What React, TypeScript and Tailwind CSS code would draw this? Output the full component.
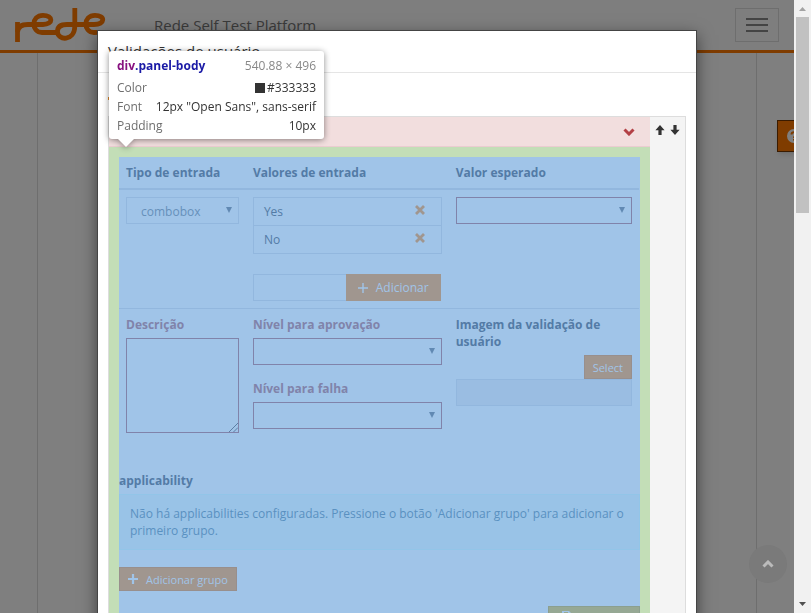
import type { ReactNode } from 'react';

function Chevron({ d, className }: { d: string; className: string }) {
  return (
    <svg viewBox="0 0 12 8" className={className} fill="none" stroke="currentColor" strokeWidth="3" aria-hidden="true">
      <path d={d} />
    </svg>
  );
}

function Plus({ thin = false }: { thin?: boolean }) {
  return (
    <svg viewBox="0 0 10 10" className="size-[10px]" fill="none" stroke="currentColor" strokeWidth={thin ? 1.4 : 2.2} aria-hidden="true">
      <path d="M5 0v10M0 5h10" />
    </svg>
  );
}

function Arrow({ down = false }: { down?: boolean }) {
  return (
    <svg viewBox="0 0 10 10" className={down ? 'size-[10px] rotate-180' : 'size-[10px]'} fill="#333" aria-hidden="true">
      <path d="M5 0l4.600 5.200H6.600V10H3.400V5.200H.4z" />
    </svg>
  );
}

function SelectBox({ id, label, options, required = false }: { id: string; label: string; options: string[]; required?: boolean }) {
  return (
    <div className="relative">
      <select
        id={id}
        aria-label={label}
        className={
          required
            ? 'block h-[27px] w-full appearance-none border border-[#8083aa] bg-transparent px-3 text-[#6690ba]'
            : 'block h-[27px] w-full appearance-none border border-[#92b7de] bg-transparent px-[14px] pt-[2px] text-[#6690ba]'
        }
      >
        {options.map((o) => (
          <option key={o}>{o}</option>
        ))}
      </select>
      <svg viewBox="0 0 6 6" className="pointer-events-none absolute top-[10px] right-[7px] size-[6px]" fill="#6189b3" aria-hidden="true">
        <path d="M0 0h6L3 6z" />
      </svg>
    </div>
  );
}

function FieldLabel({ htmlFor, children }: { htmlFor: string; children: ReactNode }) {
  return (
    <label htmlFor={htmlFor} className="mb-[5px] block font-bold text-[#8083aa]">
      {children}
    </label>
  );
}

function Page() {
  return (
    <div className="flex h-full flex-col bg-white">
      <header className="flex h-[53px] shrink-0 items-start justify-between border-b-[3px] border-[#ff7800] bg-[#fdfdfd] pr-[15px] pl-[14px]">
        <div className="flex">
          <svg viewBox="0 0 106 38" className="mt-[7px] h-[38px] w-[106px]" fill="none" stroke="#ff7800" strokeWidth="4.800" aria-label="rede" role="img">
            <path d="M3.500 35V15" />
            <path d="M3.500 25C4 19.500 8 17.500 14 17.500H29C39.500 17.500 39.500 8.300 29 8.300C17 8.300 17 25.500 28 25.500H42" />
            <path d="M60.800 1V19C60.800 34.500 43.500 34 43.500 24.500C43.500 19.500 47 17.500 53 17.500H80C91.500 17.500 91.500 8.300 81 8.300C69 8.300 69 25.500 80 25.500" />
            <path d="M78 23.100H105V25C96 25 92 27.900 80 27.900z" fill="#ff7800" stroke="none" />
          </svg>
          <span className="mt-[13px] ml-[34px] text-[15px] leading-[24px] text-[#777]">Rede Self Test Platform</span>
        </div>
        <button aria-label="Menu" className="mt-2 flex h-[34px] w-11 flex-col items-center justify-center gap-1 border border-[#ddd]">
          <span className="h-[2px] w-[22px] bg-[#888]" />
          <span className="h-[2px] w-[22px] bg-[#888]" />
          <span className="h-[2px] w-[22px] bg-[#888]" />
        </button>
      </header>
      <main className="mx-auto w-full max-w-[720px] flex-1 border-x border-[#ddd]" />
      <button aria-label="Ajuda" className="absolute top-[120px] -right-[13px] flex h-8 w-[30px] items-center justify-end border border-[#743700] bg-[#ff7800] pr-[5px] shadow-md">
        <svg viewBox="0 0 14 14" className="size-[14px]" aria-hidden="true">
          <circle cx="7" cy="7" r="7" fill="#fff" />
          <path d="M4.500 5.500C4.500 2.500 9.500 2.500 9.500 5.500C9.500 7 7 7 7 9M7 10v1.500" fill="none" stroke="#ff7800" strokeWidth="2" />
        </svg>
      </button>
    </div>
  );
}

function PanelBody() {
  return (
    <div className="h-[496px] border-[10px] border-[#c3deb7] bg-[#a0c4e8] text-[#537ba6]">
      <div className="pr-px">
        <table className="w-full table-fixed border-collapse text-left">
          <colgroup>
            <col className="w-[24.4%]" />
            <col className="w-[39%]" />
            <col />
          </colgroup>
          <thead>
            <tr className="h-8 border-b-2 border-[#92b7de]">
              <th className="px-[7px] font-bold">Tipo de entrada</th>
              <th className="px-[7px] font-bold">Valores de entrada</th>
              <th className="px-[7px] font-bold">Valor esperado</th>
            </tr>
          </thead>
          <tbody>
            <tr className="border-b border-[#92b7de] align-top">
              <td className="p-[7px]">
                <SelectBox id="tipo" label="Tipo de entrada" options={['combobox']} />
              </td>
              <td className="p-[7px]">
                <ul className="border border-[#92b7de]">
                  {['Yes', 'No'].map((v) => (
                    <li key={v} className="flex h-7 items-center justify-between border-b border-[#92b7de] pr-4 pl-[10px] last:h-[27px] last:border-b-0">
                      {v}
                      <button aria-label={`Remover ${v}`} className="mb-[3px]">
                        <svg viewBox="0 0 10 10" className="size-[10px]" stroke="#a0968f" strokeWidth="2.800" aria-hidden="true">
                          <path d="M1 1l8 8M9 1l-8 8" />
                        </svg>
                      </button>
                    </li>
                  ))}
                </ul>
                <div className="mt-5 flex pr-px">
                  <input aria-label="Novo valor" className="h-[27px] min-w-0 flex-1 border border-r-0 border-[#92b7de] bg-transparent px-2" />
                  <button className="flex h-[27px] items-center gap-2 bg-[#a0968f] px-[12px] text-[#a0c4e8]">
                    <Plus thin />
                    Adicionar
                  </button>
                </div>
              </td>
              <td className="p-[7px]">
                <SelectBox id="esperado" label="Valor esperado" options={['', 'Yes', 'No']} required />
              </td>
            </tr>
            <tr className="align-top">
              <td className="p-[7px]">
                <FieldLabel htmlFor="descricao">Descrição</FieldLabel>
                <div className="relative">
                  <textarea id="descricao" className="block h-[95px] w-full resize-none border border-[#8083aa] bg-transparent p-2" />
                  <svg viewBox="0 0 9 9" className="absolute right-[1px] bottom-[1px] size-[9px]" stroke="#5d7fa5" aria-hidden="true">
                    <path d="M0 9L9 0M4.500 9L9 4.500" />
                  </svg>
                </div>
              </td>
              <td className="p-[7px]">
                <FieldLabel htmlFor="aprovacao">Nível para aprovação</FieldLabel>
                <SelectBox id="aprovacao" label="Nível para aprovação" options={['']} required />
                <div className="mt-[15px]">
                  <FieldLabel htmlFor="falha">Nível para falha</FieldLabel>
                  <SelectBox id="falha" label="Nível para falha" options={['']} required />
                </div>
              </td>
              <td className="p-[7px]">
                <label htmlFor="imagem" className="mb-[5px] block font-bold">
                  Imagem da validação de usuário
                </label>
                <div className="flex flex-col items-end">
                  <button className="h-6 border border-[#988f8d] bg-[#a0968f] px-2 text-[11px] text-[#a0c4e8]">Select</button>
                  <input id="imagem" readOnly className="h-[27px] w-full border border-[#92b7de] bg-[#9abde2] px-2" />
                </div>
              </td>
            </tr>
          </tbody>
        </table>
      </div>
      <h4 className="mt-8 mb-[5px] font-bold">applicability</h4>
      <p className="border border-[#92c5e8] bg-[#99c3e7] px-[10px] py-[10px] text-[#5a91c1]">
        Não há applicabilities configuradas. Pressione o botão 'Adicionar grupo' para adicionar o primeiro grupo.
      </p>
      <button className="mt-[17px] flex h-6 items-center gap-2 border border-[#988f8d] bg-[#a0968f] px-[8px] text-[11px] text-[#a0c4e8]">
        <Plus />
        Adicionar grupo
      </button>
      <button className="mt-[15px] ml-auto flex h-6 w-[92px] items-start border border-[#8b9f8f] bg-[#96a894] px-[13px] pt-1 text-[#a0c4e8]">
        <svg viewBox="0 0 9 10" className="h-[10px] w-[9px]" fill="currentColor" aria-label="Salvar" role="img">
          <path d="M0 0h7l2 2v8H0zM2 1v3h4V1z" />
        </svg>
      </button>
    </div>
  );
}

function Modal() {
  return (
    <section role="dialog" aria-label="Validações de usuário" className="mx-auto mt-[30px] min-h-full w-full max-w-[600px] border border-[#444] bg-white shadow-[0_5px_15px_rgba(0,0,0,0.5)]">
      <h2 className="h-[42px] border-b border-[#e5e5e5] px-[10px] pt-[9px] text-[15px] leading-[22px] text-[#333]">Validações de usuário</h2>
      <div className="px-[10px] pt-[24px]">
        <div className="h-[3px] w-[2px] bg-[#e08a2c]" />
        <div className="mt-[16px] flex border border-[#ddd]">
          <div className="min-w-0 flex-1">
            <div className="flex h-[30px] items-center justify-end border-b border-[#ebccd1] bg-[#f2dede] pr-[15px]">
              <button aria-label="Recolher" className="text-[#b34045]">
                <Chevron d="M1.500 1.500L6 6l4.500-4.500" className="h-[8px] w-[12px]" />
              </button>
            </div>
            <PanelBody />
          </div>
          <div className="flex w-[35px] items-start justify-center gap-[5px] bg-[#f4f4f4] pt-2">
            <button aria-label="Mover para cima"><Arrow /></button>
            <button aria-label="Mover para baixo"><Arrow down /></button>
          </div>
        </div>
      </div>
    </section>
  );
}

function InspectorTooltip() {
  return (
    <div role="tooltip" className="absolute top-[51px] left-1/2 -ml-[288px] w-[215px] rounded-[3px] bg-white px-2 pt-[5px] pb-1 text-[#333] drop-shadow-[0_1px_3px_rgba(0,0,0,0.45)]">
      <div className="flex h-[22px] items-start justify-between leading-[19px]">
        <b className="text-[#881280]">div<span className="text-[#1a1aa6]">.panel-body</span></b>
        <span className="text-[#888]">540.88 × 496</span>
      </div>
      <dl className="leading-[19px]">
        <div className="flex justify-between">
          <dt className="text-[#6e6e6e]">Color</dt>
          <dd className="flex items-center gap-[2px]"><span className="size-[10px] bg-[#333]" />#333333</dd>
        </div>
        <div className="flex justify-between">
          <dt className="text-[#6e6e6e]">Font</dt>
          <dd className="whitespace-nowrap">12px "Open Sans", sans-serif</dd>
        </div>
        <div className="flex justify-between">
          <dt className="text-[#6e6e6e]">Padding</dt>
          <dd>10px</dd>
        </div>
      </dl>
      <svg viewBox="0 0 16 8" className="absolute top-full left-[9px] h-2 w-4" fill="#fff" aria-hidden="true">
        <path d="M0 0h16L8 8z" />
      </svg>
    </div>
  );
}

export default function App() {
  return (
    <div className="flex h-screen overflow-hidden font-['Open_Sans','Noto_Sans',sans-serif] text-[12px] leading-[17px]">
      <div className="relative min-w-0 flex-1 overflow-hidden">
        <Page />
        <div className="absolute inset-0 overflow-hidden bg-black/50">
          <Modal />
          <button aria-label="Voltar ao topo" className="absolute right-[7px] bottom-[30px] flex size-[38px] items-center justify-center rounded-full bg-[#7a7a7a] text-[#bbb]">
            <Chevron d="M1.500 6.500L6 2l4.500 4.500" className="h-[8px] w-[12px]" />
          </button>
        </div>
        <InspectorTooltip />
      </div>
      <div className="flex w-[17px] shrink-0 flex-col items-center bg-[#f1f1f1]" aria-hidden="true">
        <svg viewBox="0 0 17 17" className="size-[17px] shrink-0" fill="#a3a3a3"><path d="M5 11h7L8.500 7z" /></svg>
        <div className="h-[196px] w-[13px] bg-[#c1c1c1]" />
        <svg viewBox="0 0 17 17" className="mt-auto size-[17px] shrink-0" fill="#505050"><path d="M5 6h7L8.500 10z" /></svg>
      </div>
    </div>
  );
}
